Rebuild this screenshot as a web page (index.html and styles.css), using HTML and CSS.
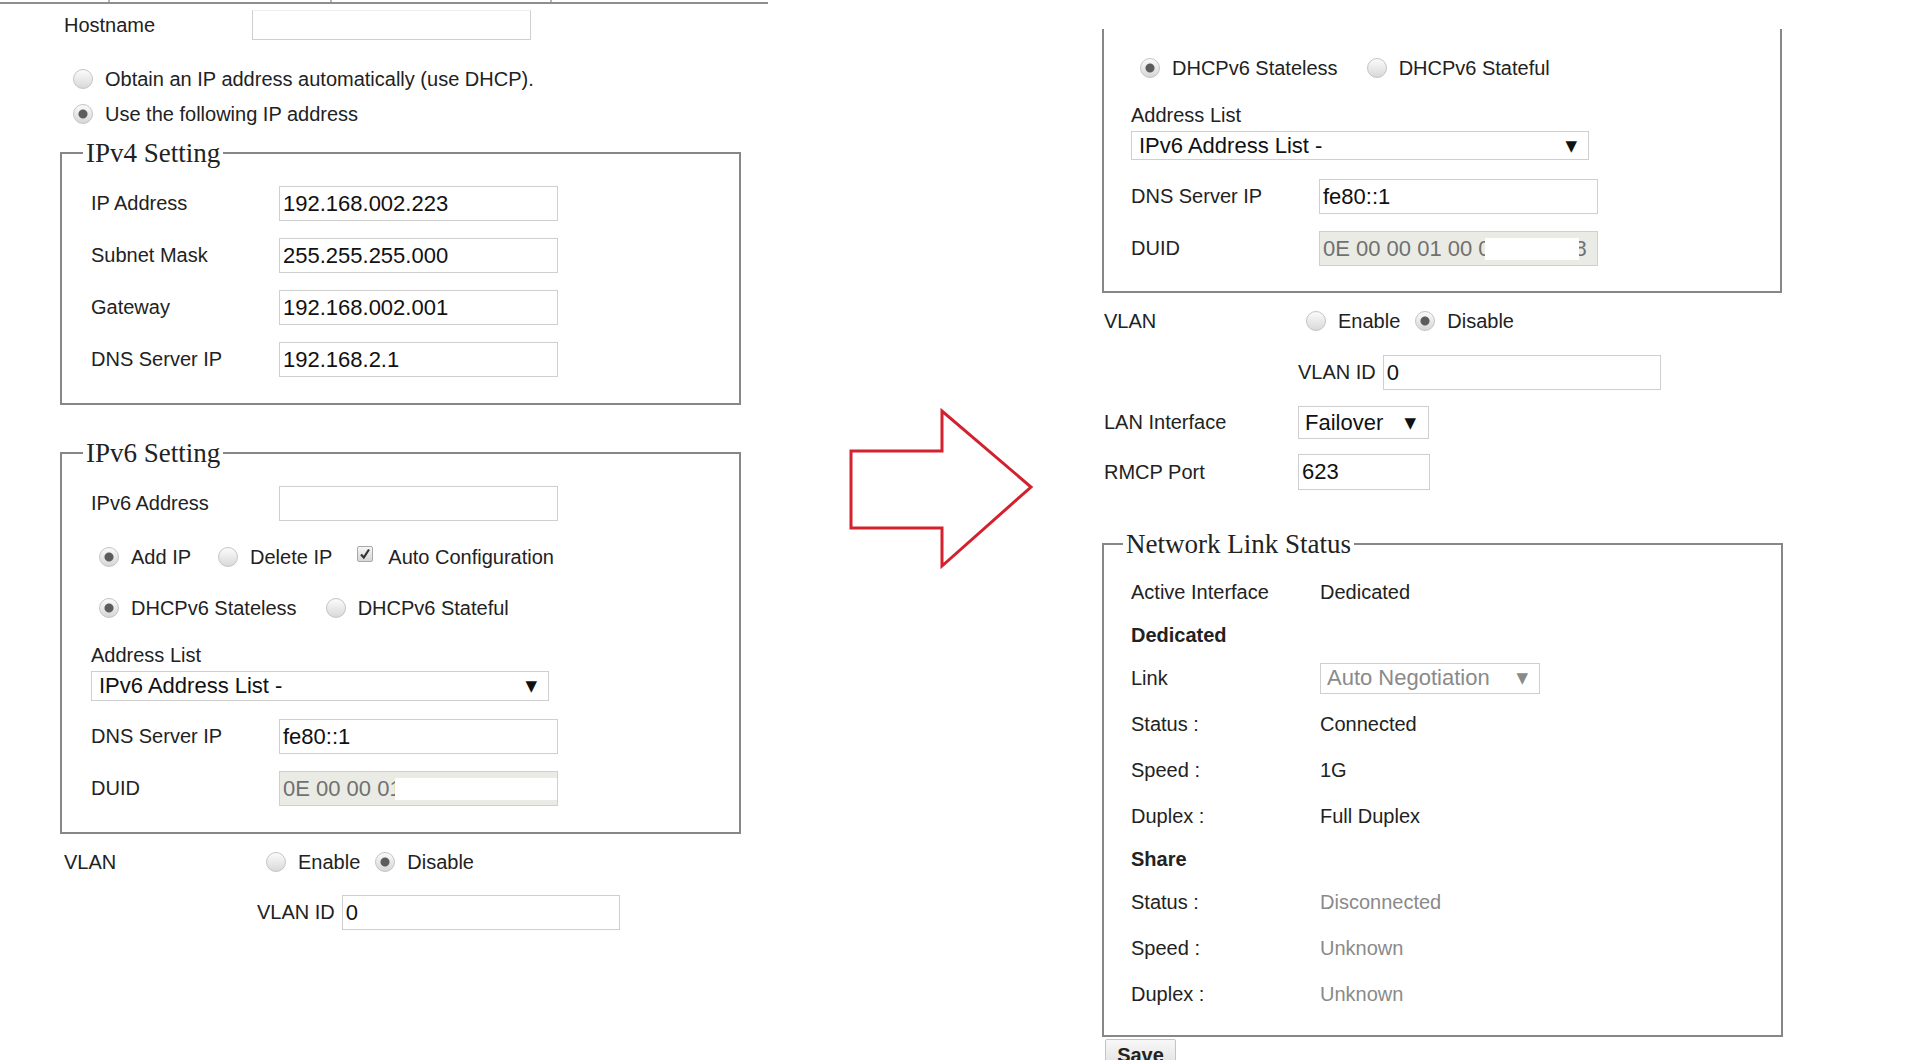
FILE: index.html
```html
<!DOCTYPE html>
<html lang="en">

<head>
    <meta charset="UTF-8">
    <meta name="viewport" content="width=device-width, initial-scale=1.0">

    <title>LAN Settings</title>
    <link rel="stylesheet" href="styles.css">
</head>

<body>
    <div class="page">

        <!-- before -->
        <section class="panel-left">

            <div class="tabs">
                <span class="tab-a"></span>
                <span class="tab-b"></span>
                <span class="tab-c"></span>
            </div>

            <div class="host">
                <label>Hostname</label>
                <input class="text host-input" type="text" value="">
            </div>

            <div class="opt opt-first"><span class="radio"></span>Obtain an IP address automatically (use DHCP).</div>
            <div class="opt opt-second"><span class="radio on"></span>Use the following IP address</div>

            <fieldset class="group v4">
                <legend>IPv4 Setting</legend>
                <div class="field"><label>IP Address</label><input class="text" type="text" value="192.168.002.223"></div>
                <div class="field"><label>Subnet Mask</label><input class="text" type="text" value="255.255.255.000"></div>
                <div class="field"><label>Gateway</label><input class="text" type="text" value="192.168.002.001"></div>
                <div class="field"><label>DNS Server IP</label><input class="text" type="text" value="192.168.2.1"></div>
            </fieldset>

            <fieldset class="group v6">
                <legend>IPv6 Setting</legend>
                <div class="field"><label>IPv6 Address</label><input class="text" type="text" value=""></div>

                <div class="choices first">
                    <span class="choice gap-add"><span class="radio on"></span>Add IP</span>
                    <span class="choice gap-del"><span class="radio"></span>Delete IP</span>
                    <span class="choice"><span class="check"><svg width="14" height="14" viewBox="0 0 14 14"><path d="M3 7.5 L5.8 10.5 L11 2.5" fill="none" stroke="#333" stroke-width="2.2"/></svg></span>Auto Configuration</span>
                </div>

                <div class="choices dhcp">
                    <span class="choice gap-dhcp"><span class="radio on"></span>DHCPv6 Stateless</span>
                    <span class="choice"><span class="radio"></span>DHCPv6 Stateful</span>
                </div>

                <div class="caption">Address List</div>
                <div class="select wide"><span>IPv6 Address List -</span><span class="caret">&#9660;</span></div>

                <div class="field dns"><label>DNS Server IP</label><input class="text" type="text" value="fe80::1"></div>
                <div class="field duid-row">
                    <label>DUID</label>
                    <div class="text duid">0E 00 00 01<span class="mask mask-l"></span></div>
                </div>
            </fieldset>

            <div class="vlan">
                <label>VLAN</label>
                <span class="choice gap-en"><span class="radio"></span>Enable</span>
                <span class="choice"><span class="radio on"></span>Disable</span>
            </div>

            <div class="vlan-id">
                <label>VLAN ID</label>
                <input class="text id-input" type="text" value="0">
            </div>

        </section>

        <div class="arrow-col">
            <svg class="arrow" width="190" height="170" viewBox="0 0 190 170">
                <path d="M3 46 L94 46 L94 6 L183 82 L94 161 L94 123 L3 123 Z" fill="none" stroke="#d3212d" stroke-width="3" stroke-linejoin="miter"/>
            </svg>
        </div>

        <!-- after -->
        <section class="panel-right">

            <div class="cutbox">
                <div class="choices right-first">
                    <span class="choice gap-dhcp"><span class="radio on"></span>DHCPv6 Stateless</span>
                    <span class="choice"><span class="radio"></span>DHCPv6 Stateful</span>
                </div>

                <div class="caption">Address List</div>
                <div class="select wide"><span>IPv6 Address List -</span><span class="caret">&#9660;</span></div>

                <div class="field dns-r"><label>DNS Server IP</label><input class="text" type="text" value="fe80::1"></div>
                <div class="field duid-row">
                    <label>DUID</label>
                    <div class="text duid">0E 00 00 01 00 0<span class="mask mask-r"></span>8</div>
                </div>
            </div>

            <div class="vlan vlan-r">
                <label>VLAN</label>
                <span class="choice gap-en"><span class="radio"></span>Enable</span>
                <span class="choice"><span class="radio on"></span>Disable</span>
            </div>

            <div class="vlan-id vlan-id-r">
                <label>VLAN ID</label>
                <input class="text id-input" type="text" value="0">
            </div>

            <div class="pair lan">
                <label>LAN Interface</label>
                <div class="select small"><span>Failover</span><span class="caret">&#9660;</span></div>
            </div>

            <div class="pair rmcp">
                <label>RMCP Port</label>
                <input class="text port" type="text" value="623">
            </div>

            <fieldset class="group status">
                <legend>Network Link Status</legend>
                <div class="stat"><span class="k">Active Interface</span><span>Dedicated</span></div>
                <div class="stat head">Dedicated</div>
                <div class="stat"><span class="k">Link</span>
                    <div class="select link"><span>Auto Negotiation</span><span class="caret">&#9660;</span></div>
                </div>
                <div class="stat"><span class="k">Status :</span><span>Connected</span></div>
                <div class="stat"><span class="k">Speed :</span><span>1G</span></div>
                <div class="stat"><span class="k">Duplex :</span><span>Full Duplex</span></div>
                <div class="stat head">Share</div>
                <div class="stat"><span class="k">Status :</span><span class="dim">Disconnected</span></div>
                <div class="stat"><span class="k">Speed :</span><span class="dim">Unknown</span></div>
                <div class="stat"><span class="k">Duplex :</span><span class="dim">Unknown</span></div>
            </fieldset>

            <button class="save">Save</button>

        </section>

    </div>
</body>

</html>
```

FILE: styles.css
```css
* {
    box-sizing: border-box;
}

body {
    margin: 0;
    background-color: #fff;
    font-family: "Liberation Sans", Arial, sans-serif;
    font-size: 20px;
    color: #222;
}

.page {
    display: flex;
    align-items: flex-start;
    width: 1920px;
    height: 1060px;
    overflow: hidden;
}

.panel-left {
    width: 768px;
    flex: none;
}

.arrow-col {
    width: 334px;
    flex: none;
}

.arrow {
    display: block;
    margin: 405px 0 0 80px;
}

.panel-right {
    flex: 1;
}

/* tab strip left over at the top */
.tabs {
    display: flex;
    height: 4px;
    border-bottom: 2px solid #8e8e8e;
}

.tabs span {
    height: 2px;
    border-right: 2px solid #b5b5b5;
}

.tabs .tab-a {
    width: 110px;
}

.tabs .tab-b {
    width: 222px;
}

.tabs .tab-c {
    width: 220px;
}

/* controls */
.text {
    width: 279px;
    height: 35px;
    border: 1px solid #cfcfcf;
    padding: 0 3px;
    font-family: "Liberation Sans", Arial, sans-serif;
    font-size: 22px;
    color: #111;
    background-color: #fff;
    outline: none;
}

.radio {
    display: inline-block;
    flex: none;
    width: 20px;
    height: 20px;
    border-radius: 50%;
    border: 1px solid #c4c4c4;
    background: linear-gradient(#fbfbfb, #d9d9d9);
    margin-right: 12px;
}

.radio.on {
    background: radial-gradient(circle, #5c5c5c 0 4px, rgba(0, 0, 0, 0) 5px), linear-gradient(#fbfbfb, #d6d6d6);
}

.check {
    display: inline-flex;
    justify-content: center;
    align-items: center;
    flex: none;
    width: 16px;
    height: 16px;
    margin-right: 15px;
    margin-top: -6px;
    border: 1px solid #a9a9a9;
    border-radius: 2px;
    background: linear-gradient(#f6f6f6, #d7d7d7);
}

.select {
    display: flex;
    justify-content: space-between;
    align-items: center;
    border: 1px solid #cfcfcf;
    background-color: #fff;
    font-size: 22px;
    color: #111;
}

.select .caret {
    font-family: "DejaVu Sans", sans-serif;
    font-size: 15px;
}

.select.wide {
    width: 458px;
    height: 30px;
    margin-top: 4px;
    padding: 0 11px 0 7px;
}

.choice {
    display: inline-flex;
    align-items: center;
}

/* left column rows */
.host {
    display: flex;
    align-items: center;
    height: 30px;
    margin: 6px 0 0 64px;
}

.host label {
    width: 188px;
}

.host .host-input {
    height: 30px;
    border-top-color: #eee;
}

.opt {
    display: flex;
    align-items: center;
    height: 24px;
    margin-left: 73px;
}

.opt-first {
    margin-top: 27px;
}

.opt-second {
    margin-top: 11px;
}

fieldset.group {
    width: 681px;
    min-width: 0;
    border: 2px solid #878787;
    padding: 18px 0 26px 29px;
}

.group legend {
    font-family: "Liberation Serif", "Times New Roman", serif;
    font-size: 27px;
    line-height: 30px;
    padding: 0 3px;
    margin-left: -8px;
    color: #222;
}

.v4 {
    margin: 12px 0 0 60px;
}

.v6 {
    margin: 33px 0 0 60px;
}

.field {
    display: flex;
    align-items: center;
    height: 35px;
}

.field + .field {
    margin-top: 17px;
}

.field label {
    width: 188px;
}

.choices {
    display: flex;
    align-items: center;
    height: 24px;
    margin-left: 8px;
}

.choices.first {
    margin-top: 24px;
}

.choices.dhcp {
    margin-top: 27px;
}

.gap-add {
    margin-right: 27px;
}

.gap-del {
    margin-right: 25px;
}

.gap-dhcp {
    margin-right: 29px;
}

.caption {
    height: 24px;
    line-height: 24px;
    margin-top: 23px;
}

.field.dns {
    margin-top: 18px;
}

.duid {
    display: flex;
    align-items: center;
    overflow: hidden;
    white-space: nowrap;
    background-color: #ebebe6;
    color: #707070;
    padding-right: 0;
}

.duid .mask {
    position: relative;
    z-index: 1;
    display: inline-block;
    flex: none;
    height: 22px;
    background-color: #fff;
}

.duid .mask-l {
    width: 170px;
    margin-left: -7px;
}

.duid .mask-r {
    width: 94px;
    margin: 0 -4px 0 -6px;
}

.vlan {
    display: flex;
    align-items: center;
    height: 24px;
    margin: 16px 0 0 64px;
}

.vlan label {
    width: 202px;
}

.gap-en {
    margin-right: 15px;
}

.vlan-id {
    display: flex;
    align-items: center;
    height: 35px;
    margin: 21px 0 0 257px;
}

.vlan-id label {
    margin-right: 7px;
}

.id-input {
    width: 278px;
}

/* right column rows */
.cutbox {
    width: 680px;
    margin-top: 29px;
    border: 2px solid #878787;
    border-top: none;
    padding: 27px 0 25px 27px;
}

.cutbox .choices {
    margin-left: 9px;
}

.cutbox .select.wide {
    height: 29px;
}

.field.dns-r {
    margin-top: 19px;
}

.vlan-r {
    margin: 16px 0 0 2px;
}

.vlan-id-r {
    margin: 22px 0 0 196px;
}

.pair {
    display: flex;
    align-items: center;
    margin-left: 2px;
}

.pair label {
    width: 194px;
}

.lan {
    height: 33px;
    margin-top: 16px;
}

.select.small {
    width: 131px;
    height: 33px;
    padding: 0 12px 0 6px;
}

.rmcp {
    height: 36px;
    margin-top: 15px;
}

.port {
    width: 132px;
    height: 36px;
}

fieldset.status {
    margin: 39px 0 0 0;
    padding: 10px 0 18px 27px;
}

.stat {
    display: flex;
    align-items: center;
    height: 46px;
}

.stat.head {
    height: 40px;
    font-weight: bold;
}

.stat .k {
    width: 189px;
}

.stat .dim {
    color: #8a8a8a;
}

.select.link {
    width: 220px;
    height: 31px;
    padding: 0 11px 0 6px;
    color: #8a8a8a;
}

.select.link .caret {
    color: #8a8a8a;
}

.save {
    display: block;
    width: 71px;
    height: 32px;
    margin: 2px 0 0 3px;
    padding: 0;
    border: 1px solid #c4c4c4;
    border-radius: 2px;
    background: linear-gradient(#f8f8f8, #dedede);
    font-family: "Liberation Sans", Arial, sans-serif;
    font-size: 20px;
    font-weight: bold;
    line-height: 30px;
    color: #222;
}
```
